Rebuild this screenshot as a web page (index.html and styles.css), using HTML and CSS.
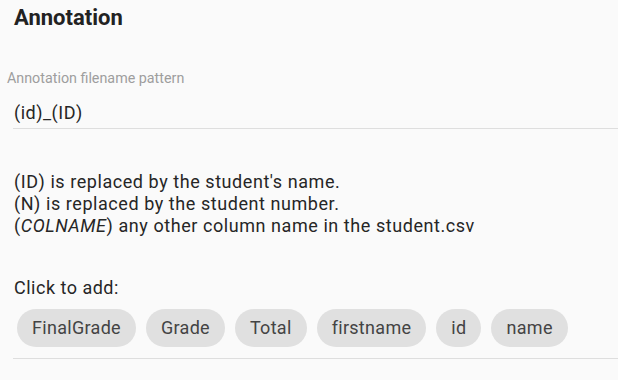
FILE: index.html
```html
<!DOCTYPE html>
<html>
<head>
<meta charset="utf-8">
<link rel="stylesheet" href="styles.css">
</head>
<body>
<div class="panel">
  <h2 class="title">Annotation</h2>
  <div class="field">
    <label class="field-label">Annotation filename pattern</label>
    <div class="field-input">(id)_(ID)</div>
  </div>
  <div class="help">
    <div>(ID) is replaced by the student's name.</div>
    <div>(N) is replaced by the student number.</div>
    <div>(<i>COLNAME</i>) any other column name in the student.csv</div>
  </div>
  <div class="add-label">Click to add:</div>
  <div class="chips">
    <span class="chip">FinalGrade</span>
    <span class="chip">Grade</span>
    <span class="chip">Total</span>
    <span class="chip">firstname</span>
    <span class="chip">id</span>
    <span class="chip">name</span>
  </div>
</div>
</body>
</html>
```

FILE: styles.css
```css
html, body {
  margin: 0;
  padding: 0;
  background: #fafafa;
}
body {
  font-family: Roboto, "Noto Sans", sans-serif;
  color: #262626;
  letter-spacing: 0.5px;
}
.panel {
  padding: 4px 0 0 13px;
}
.title {
  margin: 0;
  padding-left: 1px;
  font-size: 22px;
  line-height: 28px;
  font-weight: 700;
  letter-spacing: 0;
  color: #222;
}
.field {
  margin-top: 37px;
}
.field-label {
  display: block;
  margin-left: -6px;
  font-size: 14.3px;
  line-height: 18px;
  letter-spacing: 0;
  color: #9e9e9e;
}
.field-input {
  margin-top: 14px;
  padding: 0 0 3px 1px;
  font-size: 18px;
  line-height: 24px;
  border-bottom: 1px solid #dedede;
}
.help {
  margin-top: 42px;
  padding-left: 1px;
  font-size: 18px;
  line-height: 22px;
  letter-spacing: 0.56px;
}
.add-label {
  margin-top: 40px;
  padding-left: 1px;
  font-size: 18px;
  line-height: 22px;
}
.chips {
  display: flex;
  gap: 10px;
  margin-top: 10px;
  padding: 0 0 11px 4px;
  border-bottom: 1px solid #dedede;
}
.chip {
  height: 38px;
  line-height: 38px;
  padding: 0 15px;
  border-radius: 19px;
  background: #e0e0e0;
  font-size: 18px;
  letter-spacing: 0.3px;
  color: #444;
}
```
